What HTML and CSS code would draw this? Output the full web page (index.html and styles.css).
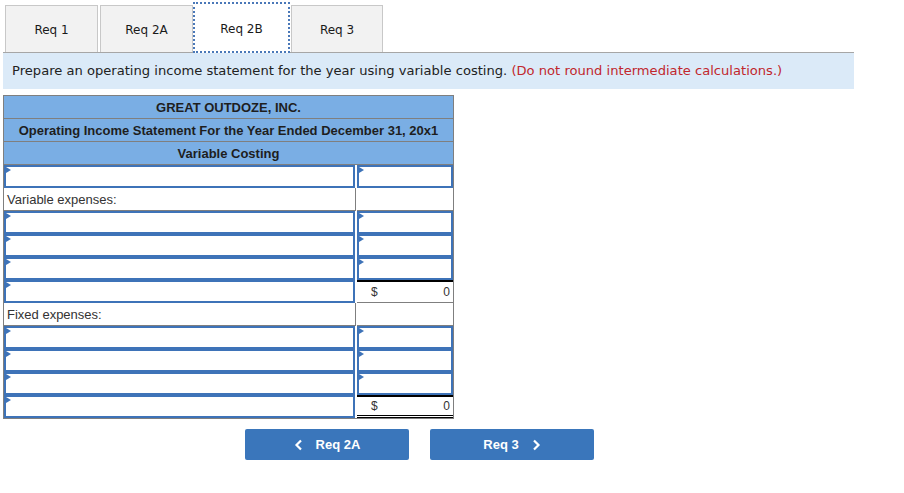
FILE: index.html
```html
<!DOCTYPE html>
<html>
<head>
<meta charset="utf-8">
<link rel="stylesheet" href="styles.css">
</head>
<body>
<div class="page">
  <div class="tabs">
    <div class="tab">Req 1</div>
    <div class="tab">Req 2A</div>
    <div class="tab active">Req 2B</div>
    <div class="tab">Req 3</div>
  </div>
  <div class="instr">Prepare an operating income statement for the year using variable costing. <span class="warn">(Do not round intermediate calculations.)</span></div>

  <div class="stmt">
    <div class="hdr">GREAT OUTDOZE, INC.</div>
    <div class="hdr">Operating Income Statement For the Year Ended December 31, 20x1</div>
    <div class="hdr">Variable Costing</div>

    <div class="row"><div class="inp"></div><div class="inp"></div></div>
    <div class="row"><div class="lbl">Variable expenses:</div><div class="blank"></div></div>
    <div class="row"><div class="inp"></div><div class="inp"></div></div>
    <div class="row"><div class="inp"></div><div class="inp"></div></div>
    <div class="row"><div class="inp"></div><div class="inp"></div></div>
    <div class="row"><div class="inp"></div><div class="total"><span>$</span><span>0</span></div></div>
    <div class="row"><div class="lbl">Fixed expenses:</div><div class="blank"></div></div>
    <div class="row"><div class="inp"></div><div class="inp"></div></div>
    <div class="row"><div class="inp"></div><div class="inp"></div></div>
    <div class="row"><div class="inp"></div><div class="inp"></div></div>
    <div class="row last"><div class="inp"></div><div class="total dbl"><span>$</span><span>0</span></div></div>
  </div>

  <div class="nav">
    <div class="btn"><svg width="10" height="12" viewBox="0 0 10 12"><path d="M7 1.5 L2.5 6 L7 10.5" fill="none" stroke="#fff" stroke-width="2.2"/></svg><span>Req 2A</span></div>
    <div class="btn"><span>Req 3</span><svg width="10" height="12" viewBox="0 0 10 12"><path d="M3 1.5 L7.5 6 L3 10.5" fill="none" stroke="#fff" stroke-width="2.2"/></svg></div>
  </div>
</div>
</body>
</html>
```
FILE: styles.css
```css
* { box-sizing: border-box; }
body { margin: 0; background: #fff; }
.page { padding: 5px 0 0 3px; width: 854px; }

.tabs { display: flex; align-items: flex-end; padding-left: 2px; gap: 2px; height: 48px; border-bottom: 1px solid #a6a6a6; }
.tab {
  width: 93px; height: 47px; background: #f2f2f2;
  border: 1px solid #c8c8c8; border-bottom: none;
  display: flex; align-items: center; justify-content: center; padding-top: 2px;
  font: 12px "DejaVu Sans", Verdana, sans-serif; color: #1a1a1a;
}
.tab:last-child { width: 92px; }
.tab.active {
  width: 97px; height: 51px; margin-bottom: -1px; background: #fff;
  border: 2px dotted #4a78b8;
  margin-left: -2px; margin-right: -1px;
}

.instr {
  background: #dbeaf8; height: 36px; padding: 10px 0 0 9px;
  font: 13.1px "DejaVu Sans", Verdana, sans-serif; color: #222;
}
.warn { color: #c1272d; }

.stmt { margin-top: 6px; width: 451px; border: 1px solid #7f7f7f; font-family: "Liberation Sans", Arial, sans-serif; }
.hdr {
  background: #7aaee4; height: 23px; border-bottom: 1px solid #7f7f7f;
  text-align: center; font-weight: bold; font-size: 13px; line-height: 23px; color: #1e1e1e;
}
.row { display: grid; grid-template-columns: 352px 1fr; height: 23px; }
.inp {
  border: 2px solid #3e73b8; position: relative; background: #fff;
}
.inp::before {
  content: ""; position: absolute; left: 0; top: 0;
  border-left: 5px solid #3e73b8; border-top: 3px solid transparent; border-bottom: 3px solid transparent;
}
.row .inp:first-child { margin-right: 1px; }
.row .inp:last-child { margin-left: 1px; }
.lbl {
  border-right: 1px solid #7f7f7f; border-bottom: 1px solid #7f7f7f;
  font-size: 13px; color: #333; padding: 4px 0 0 3px;
}
.blank { border-bottom: 1px solid #7f7f7f; margin-left: 1px; }
.total {
  border-top: 2px solid #000; border-bottom: 1px solid #7f7f7f;
  display: flex; justify-content: space-between; align-items: center;
  padding: 0 3px 0 14px; font-size: 12px; color: #333; margin-left: 1px;
}
.total.dbl { border-bottom: 3px double #000; }

.nav { display: flex; gap: 21px; margin: 10px 0 0 242px; }
.btn {
  width: 164px; height: 31px; background: #3a76bb; border-radius: 2px;
  display: flex; align-items: center; justify-content: center; gap: 12px;
  color: #fff; font: bold 13px "Liberation Sans", Arial, sans-serif;
}
```
